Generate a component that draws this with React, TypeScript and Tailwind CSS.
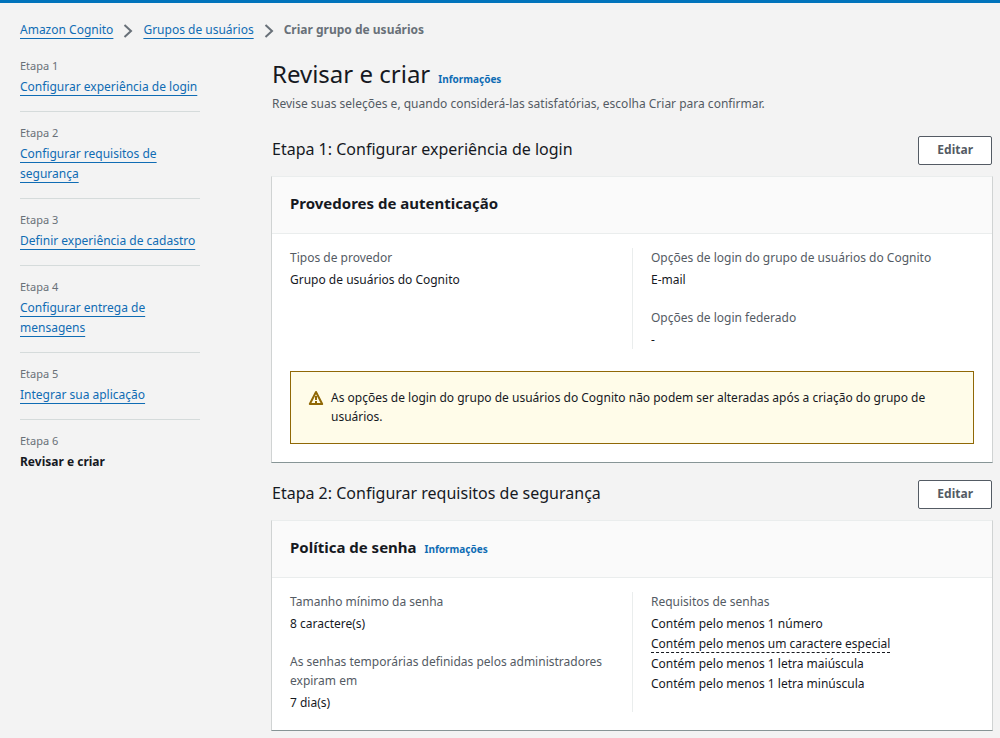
import type { ReactNode } from 'react';

const linkClass = 'text-[#0f6cb4] underline decoration-1 underline-offset-4';

const steps = [
  'Configurar experiência de login',
  'Configurar requisitos de segurança',
  'Definir experiência de cadastro',
  'Configurar entrega de mensagens',
  'Integrar sua aplicação',
  'Revisar e criar',
];

function Separator() {
  return (
    <svg viewBox="0 0 10 16" className="mt-[2px] h-4 w-[10px]" fill="none" stroke="#687078" strokeWidth="2" aria-hidden="true">
      <path d="M1.5 2 L8 8 L1.5 14" />
    </svg>
  );
}

function WarningIcon() {
  return (
    <svg viewBox="0 0 16 16" className="mt-[2px] h-4 w-4 shrink-0" fill="none" stroke="#906806" strokeWidth="2" aria-hidden="true">
      <path d="M8 2 L14.2 14 H1.8 Z" strokeLinejoin="round" />
      <path d="M8 6 V10 M8 11 V13" />
    </svg>
  );
}

function InfoLink() {
  return (
    <a href="#informacoes" className="text-[10px] leading-5 font-bold text-[#0f6cb4]">
      Informações
    </a>
  );
}

function Field({ label, children }: { label: string; children: ReactNode }) {
  return (
    <div>
      <dt className="mb-[3px] text-[#545b64]">{label}</dt>
      <dd>{children}</dd>
    </div>
  );
}

function Columns({ left, right }: { left: ReactNode; right: ReactNode }) {
  return (
    <div className="grid grid-cols-2">
      <dl className="flex flex-col gap-[19px] pr-5">{left}</dl>
      <dl className="flex flex-col gap-[19px] border-l border-[#eaeded] pl-[18px]">{right}</dl>
    </div>
  );
}

function Section({ title, heading, info, children }: { title: string; heading: string; info?: boolean; children: ReactNode }) {
  return (
    <section>
      <div className="flex items-start justify-between px-px pb-[11px]">
        <h2 className="text-[16px] leading-[26px]">{title}</h2>
        <button type="button" className="h-[29px] rounded-[2px] border border-[#545b64] bg-white px-[18px] pb-[2px] text-[12px] leading-5 font-bold text-[#545b64]">
          Editar
        </button>
      </div>
      <div className="border border-t-[#eaeded] border-r-[#d0d3d3] border-b-[#879596] border-l-[#d0d3d3] bg-white leading-[19px]">
        <div className="flex items-baseline gap-2 border-b border-[#eaeded] bg-[#fafafa] px-[18px] pt-3 pb-4">
          <h3 className="text-[15px] leading-7 font-bold">{heading}</h3>
          {info && <InfoLink />}
        </div>
        <div className="px-[18px] pt-[14px] pb-[18px]">{children}</div>
      </div>
    </section>
  );
}

export default function App() {
  return (
    <div className="min-h-screen border-t-3 border-[#0073bb] bg-[#f3f3f3] font-['Noto_Sans',sans-serif] text-[12px] leading-5 text-[#16191f]">
      <nav aria-label="Trilha" className="flex items-center gap-[10px] px-5 pt-[17px]">
        <a href="#cognito" className={linkClass}>Amazon Cognito</a>
        <Separator />
        <a href="#grupos" className={linkClass}>Grupos de usuários</a>
        <Separator />
        <span className="font-bold text-[#687078]">Criar grupo de usuários</span>
      </nav>
      <div className="flex pt-[15px] pr-[7px] pl-5">
        <ol className="mr-[71px] w-[180px] shrink-0">
          {steps.map((step, i) => (
            <li key={step} className="mb-[10px] border-b border-[#d5dbdb] pb-[14px] last:border-b-0">
              <div className="text-[11px] leading-[22px] text-[#687078]">Etapa {i + 1}</div>
              {i < steps.length - 1 ? (
                <a href={`#etapa-${i + 1}`} className={linkClass}>{step}</a>
              ) : (
                <span className="font-bold">{step}</span>
              )}
            </li>
          ))}
        </ol>
        <main className="min-w-0 flex-1">
          <div className="flex items-baseline gap-2 px-px pb-px">
            <h1 className="text-[24px] leading-[38px]">Revisar e criar</h1>
            <InfoLink />
          </div>
          <p className="px-px text-[#545b64]">Revise suas seleções e, quando considerá-las satisfatórias, escolha Criar para confirmar.</p>
          <div className="flex flex-col gap-[17px] pt-[22px]">
            <Section title="Etapa 1: Configurar experiência de login" heading="Provedores de autenticação">
              <Columns
                left={<Field label="Tipos de provedor">Grupo de usuários do Cognito</Field>}
                right={
                  <>
                    <Field label="Opções de login do grupo de usuários do Cognito">E-mail</Field>
                    <Field label="Opções de login federado">-</Field>
                  </>
                }
              />
              <div role="note" className="mt-[22px] flex gap-[7px] border border-[#906806] bg-[#fffce9] px-[17px] pt-4 pb-[17px]">
                <WarningIcon />
                <p>As opções de login do grupo de usuários do Cognito não podem ser alteradas após a criação do grupo de usuários.</p>
              </div>
            </Section>
            <Section title="Etapa 2: Configurar requisitos de segurança" heading="Política de senha" info>
              <Columns
                left={
                  <>
                    <Field label="Tamanho mínimo da senha">8 caractere(s)</Field>
                    <Field label="As senhas temporárias definidas pelos administradores expiram em">7 dia(s)</Field>
                  </>
                }
                right={
                  <Field label="Requisitos de senhas">
                    <ul className="leading-5">
                      <li>Contém pelo menos 1 número</li>
                      <li>
                        <span className="border-b border-dashed border-[#16191f]">Contém pelo menos um caractere especial</span>
                      </li>
                      <li>Contém pelo menos 1 letra maiúscula</li>
                      <li>Contém pelo menos 1 letra minúscula</li>
                    </ul>
                  </Field>
                }
              />
            </Section>
          </div>
        </main>
      </div>
    </div>
  );
}
